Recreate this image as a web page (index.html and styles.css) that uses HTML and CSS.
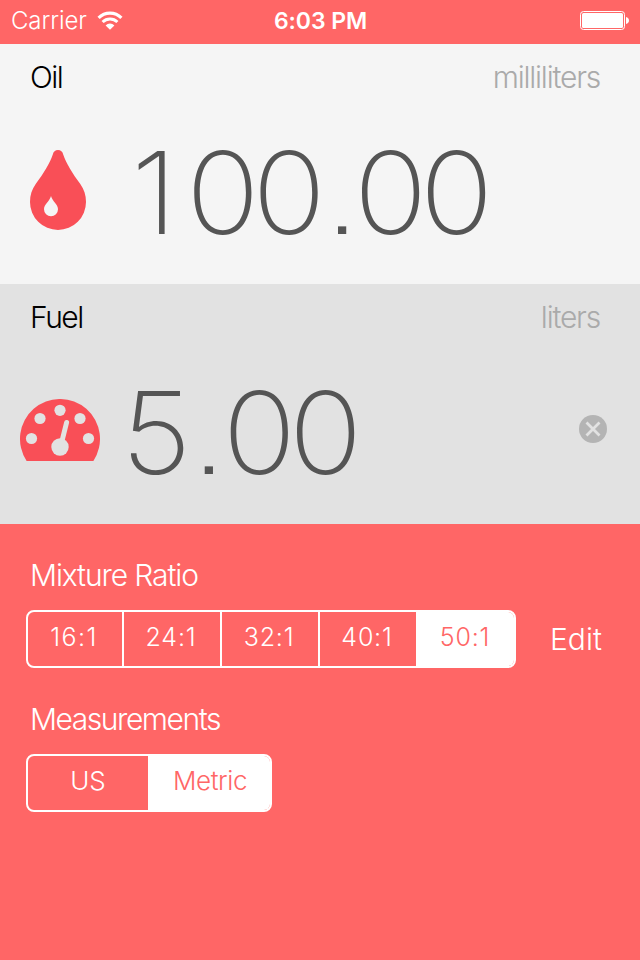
FILE: index.html
```
<!DOCTYPE html>
<html lang="en">
<head>
    <meta charset="UTF-8">
    <meta name="viewport" content="width=device-width, initial-scale=1.0">
    <title>Fuel Mixture Calculator</title>
    <link rel="stylesheet" href="styles.css">
</head>
<body>
    <div class="app">
        <!-- Status bar -->
        <div class="status-bar">
            <div class="status-left">
                <span class="carrier">Carrier</span>
                <svg class="wifi" width="26" height="20" viewBox="0 0 26 20">
                    <path d="M1.6 6.9a16.2 16.2 0 0 1 22.8 0" fill="none" stroke="#fff" stroke-width="3.2"/>
                    <path d="M5.6 11a10.5 10.5 0 0 1 14.8 0" fill="none" stroke="#fff" stroke-width="3"/>
                    <path d="M13 18.8l-4.4-4.4a6.3 6.3 0 0 1 8.8 0z" fill="#fff"/>
                </svg>
            </div>
            <span class="time">6:03 PM</span>
            <div class="status-right">
                <svg class="battery" width="50" height="20" viewBox="0 0 50 20">
                    <rect x="0.5" y="0.5" width="44" height="18" rx="3" fill="none" stroke="#fff"/>
                    <rect x="2" y="2" width="41" height="15" rx="1.5" fill="#fff"/>
                    <path d="M46 6c1.8 0.4 3 1.6 3 3.5s-1.2 3.1-3 3.5z" fill="#fff"/>
                </svg>
            </div>
        </div>

        <!-- Oil -->
        <div class="panel oil">
            <div class="panel-header">
                <span class="name">Oil</span>
                <span class="unit">milliliters</span>
            </div>
            <div class="panel-body">
                <div class="icon">
                    <svg width="56" height="80" viewBox="0 0 56 80">
                        <path d="M28 0C30.7 0 32.6 1.7 33.2 4.5C36 13 42.5 23.5 50.3 34C54.2 39.5 56 45 56 52A28 28 0 0 1 0 52C0 45 1.8 39.5 5.7 34C13.5 23.5 20 13 22.8 4.5C23.4 1.7 25.3 0 28 0z" fill="#f94f57"/>
                        <path d="M21 46C22.2 51 28 54.5 28 59.2A7 7 0 0 1 14 59.2C14 54.5 19.8 51 21 46z" fill="#f5f5f5"/>
                    </svg>
                </div>
                <div class="value"><span class="one">1</span>00<span class="point">.</span>00</div>
            </div>
        </div>

        <!-- Fuel -->
        <div class="panel fuel">
            <div class="panel-header">
                <span class="name">Fuel</span>
                <span class="unit">liters</span>
            </div>
            <div class="panel-body">
                <div class="icon">
                    <svg width="80" height="62" viewBox="0 0 80 62">
                        <path d="M6.6 62A40 40 0 1 1 73.4 62z" fill="#f94f57"/>
                        <g fill="#e2e2e2">
                            <circle cx="11.5" cy="39.5" r="5.6"/>
                            <circle cx="20" cy="19.5" r="5.6"/>
                            <circle cx="40" cy="11.3" r="5.6"/>
                            <circle cx="60" cy="19.5" r="5.6"/>
                            <circle cx="68.5" cy="39.5" r="5.6"/>
                            <circle cx="40" cy="48" r="8.7"/>
                        </g>
                        <path d="M41 46L46.6 23.5" stroke="#e2e2e2" stroke-width="5" stroke-linecap="round"/>
                    </svg>
                </div>
                <div class="value">5<span class="point">.</span>00</div>
                <svg class="clear" width="28" height="28" viewBox="0 0 28 28">
                    <circle cx="14" cy="14" r="14" fill="#b4b4b4"/>
                    <path d="M7.5 7.5L20.5 20.5M20.5 7.5L7.5 20.5" stroke="#e2e2e2" stroke-width="2.8"/>
                </svg>
            </div>
        </div>

        <!-- Settings -->
        <div class="settings">
            <div class="label">Mixture Ratio</div>
            <div class="row">
                <div class="segmented ratio">
                    <div class="segment">16:1</div>
                    <div class="segment">24:1</div>
                    <div class="segment">32:1</div>
                    <div class="segment">40:1</div>
                    <div class="segment selected">50:1</div>
                </div>
                <div class="edit">Edit</div>
            </div>
            <div class="label measure-label">Measurements</div>
            <div class="segmented measure">
                <div class="segment">US</div>
                <div class="segment selected">Metric</div>
            </div>
        </div>
    </div>
</body>
</html>
```

FILE: styles.css
```
* {
    box-sizing: border-box;
}

body {
    margin: 0;
    font-family: Inter, "Liberation Sans", sans-serif;
    background-color: #ff6666;
}

.app {
    width: 640px;
    height: 960px;
    overflow: hidden;
}

/* Status bar */
.status-bar {
    display: grid;
    grid-template-columns: 1fr auto 1fr;
    align-items: center;
    height: 44px;
    padding: 0 10px 2px 11px;
    color: #fff;
    font-size: 24px;
    line-height: 40px;
}

.status-left {
    display: flex;
    align-items: center;
    gap: 10px;
}

.carrier {
    font-weight: 300;
    letter-spacing: -0.1px;
}

.time {
    font-weight: 600;
    font-size: 23px;
    letter-spacing: -0.1px;
}

.status-right {
    display: flex;
    justify-content: flex-end;
}

/* Oil and fuel panels */
.panel {
    height: 240px;
}

.oil {
    background-color: #f5f5f5;
}

.fuel {
    background-color: #e2e2e2;
}

.panel-header {
    display: flex;
    justify-content: space-between;
    padding: 13px 40px 0 30px;
    font-size: 30px;
    font-weight: 300;
    line-height: 40px;
    height: 53px;
}

.name {
    color: #000;
    letter-spacing: -1.5px;
}

.unit {
    color: #aaa;
    letter-spacing: -1.2px;
}

.panel-body {
    display: flex;
    align-items: center;
    height: 187px;
    padding: 0 33px 2px 20px;
}

.icon {
    display: flex;
    justify-content: center;
    width: 76px;
}

.fuel .icon {
    width: 80px;
}

.value {
    flex: 1;
    margin-left: 35px;
    padding-top: 6px;
    color: #555;
    font-size: 114px;
    font-weight: 170;
    line-height: 140px;
    font-feature-settings: "ss07";
    letter-spacing: -7px;
    transform: scaleX(1.07);
    transform-origin: left;
}

.fuel .value {
    margin-left: 21px;
}

/* The narrow figure needs more room after it */
.one {
    letter-spacing: 8px;
}

.point {
    margin: 0 2px 0 6.5px;
}

.fuel .point {
    margin: 0 4px 0 7.5px;
}

.clear {
    margin-bottom: 2px;
}

/* Settings */
.settings {
    padding: 31px 26px 0;
    color: #fff;
}

.label {
    height: 39px;
    margin-left: 4px;
    font-size: 30px;
    font-weight: 300;
    line-height: 40px;
    letter-spacing: -1.1px;
}

.measure-label {
    letter-spacing: -1.45px;
}

.row {
    display: flex;
    align-items: center;
    margin-bottom: 31px;
}

.segmented {
    display: flex;
    height: 58px;
    border: 2px solid #fff;
    border-radius: 8px;
    overflow: hidden;
}

.ratio {
    width: 490px;
    margin-top: 16px;
}

.measure {
    width: 246px;
    margin-top: 16px;
}

.segment {
    flex: 1;
    text-align: center;
    font-size: 26px;
    font-weight: 350;
    line-height: 50px;
    border-left: 2px solid #fff;
}

.segment:first-child {
    border-left: none;
}

.ratio .segment {
    flex: none;
    width: 98px;
    padding-right: 2px;
    font-size: 25px;
    line-height: 51px;
    letter-spacing: 0.8px;
}

.ratio .segment:first-child {
    width: 94px;
    letter-spacing: 1.4px;
}

.selected {
    background-color: #fff;
    color: #ff6666;
}

.measure .selected {
    letter-spacing: -0.4px;
}

.edit {
    margin-top: 16px;
    margin-left: 34px;
    font-size: 30px;
    font-weight: 300;
}
```
